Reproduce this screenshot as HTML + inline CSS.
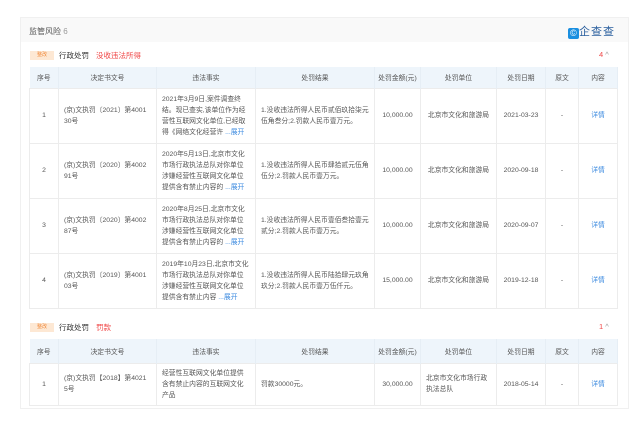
<!DOCTYPE html>
<html><head><meta charset="utf-8"><style>
*{margin:0;padding:0;box-sizing:border-box}
body{width:641px;height:423px;background:#fff;font-family:"Liberation Sans","Noto Sans CJK SC",sans-serif;color:#333;position:relative;overflow:hidden;font-size:7px}
.panel{position:absolute;left:20px;top:17px;width:609px;height:392px;background:#fff;border:1px solid #f0f0f0}
.hdr{position:absolute;left:0;top:0;width:100%;height:24px;background:#f9f9f9}
.ab{position:absolute}
table{position:absolute;border-collapse:collapse;table-layout:fixed;font-size:6.8px;color:#555}
th{background:#eef5fb;font-weight:normal;color:#555;height:21px;border-right:1px solid #e6eef5}
td{border:1px solid #ececec;padding:0 5px;line-height:11px;vertical-align:middle}
td.c{text-align:center}
.tag{position:absolute;background:#fde8d4;color:#f08a3c;font-size:5px;width:24px;height:9px;line-height:9px;text-align:center}
.blue{color:#3d8be0}
</style></head><body>
<div class="panel">
<div class="hdr"><span class="ab" style="left:8px;top:8px;font-size:8px;color:#555">监管风险 <span style="color:#999">6</span></span>
<div class="ab" style="left:547px;top:5px;font-size:11px;color:#2a5f9e;letter-spacing:1px"><span style="display:inline-block;width:11px;height:11px;background:#1a8fe0;border-radius:2px;vertical-align:-1px;color:#fff;font-size:9px;text-align:center;line-height:11px;letter-spacing:0">©</span>企查查</div></div>
<div class="tag" style="left:9px;top:33px">整改</div>
<span class="ab" style="left:38px;top:32px;font-size:7.5px">行政处罚</span>
<span class="ab" style="left:75px;top:32px;font-size:7.5px;color:#f04848">没收违法所得</span>
<span class="ab" style="left:578px;top:32px;font-size:7.5px;color:#f04848">4 <span style="color:#999">^</span></span>
<div class="tag" style="left:9px;top:305px">整改</div>
<span class="ab" style="left:38px;top:304px;font-size:7.5px">行政处罚</span>
<span class="ab" style="left:75px;top:304px;font-size:7.5px;color:#f04848">罚款</span>
<span class="ab" style="left:578px;top:304px;font-size:7.5px;color:#f04848">1 <span style="color:#999">^</span></span>
</div>
<table style="left:29px;top:67px;width:588px">
<colgroup><col style="width:29px"><col style="width:98px"><col style="width:99px"><col style="width:119px"><col style="width:46px"><col style="width:76px"><col style="width:49px"><col style="width:33px"><col style="width:39px"></colgroup>
<tr><th>序号</th><th>决定书文号</th><th>违法事实</th><th>处罚结果</th><th>处罚金额(元)</th><th>处罚单位</th><th>处罚日期</th><th>原文</th><th>内容</th></tr>
<tr style="height:55px"><td class="c">1</td><td>(京)文执罚〔2021〕第4001 30号</td><td>2021年3月9日,案件调查终结。现已查实,该单位作为经营性互联网文化单位,已经取得《网络文化经营许 <span class="blue">...展开</span></td><td>1.没收违法所得人民币贰佰玖拾柒元伍角叁分;2.罚款人民币壹万元。</td><td class="c">10,000.00</td><td class="c">北京市文化和旅游局</td><td class="c">2021-03-23</td><td class="c">-</td><td class="c blue">详情</td></tr>
<tr style="height:55px"><td class="c">2</td><td>(京)文执罚〔2020〕第4002 91号</td><td>2020年5月13日,北京市文化市场行政执法总队对你单位涉嫌经营性互联网文化单位提供含有禁止内容的 <span class="blue">...展开</span></td><td>1.没收违法所得人民币肆拾贰元伍角伍分;2.罚款人民币壹万元。</td><td class="c">10,000.00</td><td class="c">北京市文化和旅游局</td><td class="c">2020-09-18</td><td class="c">-</td><td class="c blue">详情</td></tr>
<tr style="height:55px"><td class="c">3</td><td>(京)文执罚〔2020〕第4002 87号</td><td>2020年8月25日,北京市文化市场行政执法总队对你单位涉嫌经营性互联网文化单位提供含有禁止内容的 <span class="blue">...展开</span></td><td>1.没收违法所得人民币壹佰叁拾壹元贰分;2.罚款人民币壹万元。</td><td class="c">10,000.00</td><td class="c">北京市文化和旅游局</td><td class="c">2020-09-07</td><td class="c">-</td><td class="c blue">详情</td></tr>
<tr style="height:55px"><td class="c">4</td><td>(京)文执罚〔2019〕第4001 03号</td><td>2019年10月23日,北京市文化市场行政执法总队对你单位涉嫌经营性互联网文化单位提供含有禁止内容 <span class="blue">...展开</span></td><td>1.没收违法所得人民币陆拾肆元玖角玖分;2.罚款人民币壹万伍仟元。</td><td class="c">15,000.00</td><td class="c">北京市文化和旅游局</td><td class="c">2019-12-18</td><td class="c">-</td><td class="c blue">详情</td></tr>
</table>
<table style="left:29px;top:339px;width:588px">
<colgroup><col style="width:29px"><col style="width:98px"><col style="width:99px"><col style="width:119px"><col style="width:46px"><col style="width:76px"><col style="width:49px"><col style="width:33px"><col style="width:39px"></colgroup>
<tr><th style="height:24px">序号</th><th>决定书文号</th><th>违法事实</th><th>处罚结果</th><th>处罚金额(元)</th><th>处罚单位</th><th>处罚日期</th><th>原文</th><th>内容</th></tr>
<tr style="height:42px"><td class="c">1</td><td>(京)文执罚【2018】第4021 5号</td><td>经营性互联网文化单位提供含有禁止内容的互联网文化产品</td><td>罚款30000元。</td><td class="c">30,000.00</td><td>北京市文化市场行政执法总队</td><td class="c">2018-05-14</td><td class="c">-</td><td class="c blue">详情</td></tr>
</table>
</body></html>
